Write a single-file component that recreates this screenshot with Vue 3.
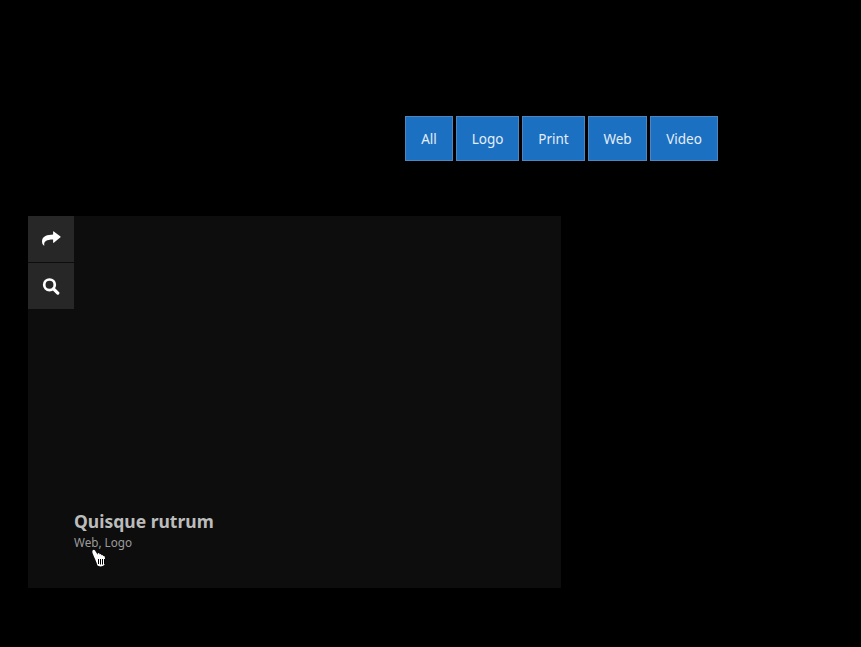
<script setup>
const filters = ['All', 'Logo', 'Print', 'Web', 'Video']
</script>

<template>
  <div class="page">
    <nav class="filters">
      <button v-for="f in filters" :key="f" class="filter" :class="'f-' + f.toLowerCase()">{{ f }}</button>
    </nav>
    <article class="card">
      <div class="actions">
        <a class="action">
          <svg width="20" height="16" viewBox="0 0 20 16"><path fill="#fff" d="M19.500 5.600 12.800.4c-.3-.2-.7 0-.7.4v2.700C6.500 3.700 1 5 1 10.500c0 1.800.8 3.200 1.800 4.100.3.200.6 0 .5-.3C2.500 10.300 5.500 8.500 12.100 8.400v3c0 .4.400.6.7.4l6.700-5.500c.2-.2.2-.5 0-.7z"/></svg>
        </a>
        <a class="action">
          <svg width="18" height="20" viewBox="0 0 18 20"><circle cx="7.500" cy="8.800" r="5.300" fill="none" stroke="#fff" stroke-width="2.700"/><path d="M11.500 12.800 15.800 17.100" stroke="#fff" stroke-width="3.200" stroke-linecap="round"/></svg>
        </a>
      </div>
      <div class="caption">
        <h3>Quisque rutrum</h3>
        <p>Web, Logo</p>
      </div>
      <svg class="cursor" width="15" height="18" viewBox="0 0 15 18">
        <path fill="#fff" d="M.6 1.500C1.200.5 2.400.6 3 1.500l2.700 4.200V4.500c.5-.8 1.300-.8 1.700 0l.1 1c.5-.8 1.300-.7 1.700 0l.2.900c.5-.6 1.300-.5 1.600.2l.4.600c.6-.3 1.300 0 1.400.7.400 2.500.2 5.500-.5 8.200-1.600 1.700-5.500 1.800-6.900.2C4.500 13 2.200 8.500.6 4.300.3 3.300.2 2.200.6 1.500z"/>
        <path stroke="#000" stroke-width="1" d="M6.500 10v5M8.500 10v5.500M10.500 10v5.500M12.500 10v5"/>
      </svg>
    </article>
  </div>
</template>

<style>
html, body { margin: 0; background: #000; }
</style>

<style scoped>
.page { height: 647px; background: #000; font-family: "Noto Sans", sans-serif; padding: 116px 0 0 28px; box-sizing: border-box; overflow: hidden; }
.filters { display: flex; gap: 3px; margin-left: 377px; height: 45px; }
.filter { box-sizing: border-box; height: 45px; padding: 0; background: #1b70c2; border: 1px solid #4f86bd; color: #e4eef8; font: 13.500px "Noto Sans", sans-serif; }
.f-all { width: 48px; }
.f-logo { width: 63px; }
.f-print { width: 63px; }
.f-web { width: 59px; }
.f-video { width: 68px; }
.card { position: relative; width: 533px; height: 372px; margin-top: 55px; background: #0d0d0d; }
.actions { position: absolute; left: 0; top: 0; width: 46px; display: flex; flex-direction: column; gap: 1px; }
.action { height: 46px; background: #272727; display: flex; align-items: center; justify-content: center; }
.caption { position: absolute; left: 46px; top: 293px; color: #bcbcbc; }
h3 { margin: 0; font-size: 17.500px; line-height: 24px; font-weight: 700; }
p { margin: 0; font-size: 11.700px; line-height: 18px; color: #9c9c9c; }
.cursor { position: absolute; left: 64px; top: 333px; }
</style>
